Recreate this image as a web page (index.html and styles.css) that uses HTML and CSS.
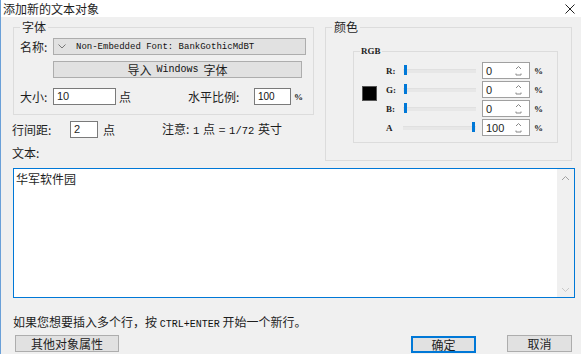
FILE: index.html
```html
<!DOCTYPE html>
<html lang="zh-CN">
<head>
<meta charset="utf-8">
<title>添加新的文本对象</title>
<link rel="stylesheet" href="styles.css">
</head>
<body>
<div class="window">
  <div class="titlebar">
    <span class="title">添加新的文本对象</span>
    <svg class="close" width="10" height="10" viewBox="0 0 10 10"><path d="M0.5 0.5L9.5 9.5M9.5 0.5L0.5 9.5" stroke="#222" stroke-width="1" fill="none"/></svg>
  </div>
  <div class="main">
    <div class="top">
      <div class="leftcol">
        <fieldset class="group font-group">
          <legend>字体</legend>
          <div class="row r1">
            <span class="lbl w33">名称:</span>
            <div class="combo"><svg class="chev" width="8" height="5" viewBox="0 0 8 5"><path d="M0.5 0.5L4 4L7.5 0.5" stroke="#777" fill="none"/></svg><span class="mono combo-text">Non-Embedded Font: BankGothicMdBT</span></div>
          </div>
          <div class="row r2">
            <div class="btn import"><span>导入</span><span class="mono win">Windows</span><span>字体</span></div>
          </div>
          <div class="row r3">
            <span class="lbl w33">大小:</span>
            <div class="input size">10</div>
            <span class="lbl pt">点</span>
            <span class="lbl w66">水平比例:</span>
            <div class="input scale mono">100</div>
            <span class="pct">%</span>
          </div>
        </fieldset>
        <div class="row spacing">
          <span class="lbl w58">行间距:</span>
          <div class="input line">2</div>
          <span class="lbl pt2">点</span>
          <span class="lbl note">注意: <span class="mono n">1</span> 点 = <span class="mono n">1/72</span> 英寸</span>
        </div>
        <div class="textlbl">文本:</div>
      </div>
      <fieldset class="group color-group">
        <legend>颜色</legend>
        <fieldset class="group rgb">
          <legend class="serif">RGB</legend>
          <div class="rgbbody">
            <div class="swatch"></div>
            <div class="sliders">
              <div class="srow">
                <span class="ch serif">R:</span>
                <div class="track"><div class="thumb" style="left:1px"></div></div>
                <div class="spin"><span>0</span><svg width="7" height="11" viewBox="0 0 7 11"><path d="M1 4L3.5 1.5L6 4" stroke="#888" fill="none"/><path d="M1 8.5V10H6V8.5" stroke="#888" fill="none"/></svg></div>
                <span class="pct serif">%</span>
              </div>
              <div class="srow">
                <span class="ch serif">G:</span>
                <div class="track"><div class="thumb" style="left:1px"></div></div>
                <div class="spin"><span>0</span><svg width="7" height="11" viewBox="0 0 7 11"><path d="M1 4L3.5 1.5L6 4" stroke="#888" fill="none"/><path d="M1 8.5V10H6V8.5" stroke="#888" fill="none"/></svg></div>
                <span class="pct serif">%</span>
              </div>
              <div class="srow">
                <span class="ch serif">B:</span>
                <div class="track"><div class="thumb" style="left:1px"></div></div>
                <div class="spin"><span>0</span><svg width="7" height="11" viewBox="0 0 7 11"><path d="M1 4L3.5 1.5L6 4" stroke="#888" fill="none"/><path d="M1 8.5V10H6V8.5" stroke="#888" fill="none"/></svg></div>
                <span class="pct serif">%</span>
              </div>
              <div class="srow">
                <span class="ch serif">A</span>
                <div class="track"><div class="thumb" style="left:69px"></div></div>
                <div class="spin"><span>100</span><svg width="7" height="11" viewBox="0 0 7 11"><path d="M1 4L3.5 1.5L6 4" stroke="#888" fill="none"/><path d="M1 8.5V10H6V8.5" stroke="#888" fill="none"/></svg></div>
                <span class="pct serif">%</span>
              </div>
            </div>
          </div>
        </fieldset>
      </fieldset>
    </div>
    <div class="textarea">
      <div class="text">华军软件园</div>
      <div class="scrollbar">
        <svg width="9" height="6" viewBox="0 0 9 6"><path d="M1 5L4.5 1.5L8 5" stroke="#a0a0a0" fill="none"/></svg>
        <svg width="9" height="6" viewBox="0 0 9 6"><path d="M1 1L4.5 4.5L8 1" stroke="#c8c8c8" fill="none"/></svg>
      </div>
    </div>
    <div class="hint">如果您想要插入多个行，按 <span class="mono hk">CTRL+ENTER</span> 开始一个新行。</div>
    <div class="buttons">
      <div class="btn other">其他对象属性</div>
      <div class="btn ok">确定</div>
      <div class="btn cancel">取消</div>
    </div>
  </div>
</div>
</body>
</html>
```
FILE: styles.css
```css
* { box-sizing: border-box; }
html, body { margin: 0; padding: 0; }
body {
  width: 581px;
  height: 354px;
  overflow: hidden;
  font-family: "Noto Sans CJK SC", "Noto Sans", sans-serif;
  font-size: 12px;
  color: #1e1e1e;
  background: #f0f0f0;
}
.window {
  width: 581px;
  height: 354px;
  border-left: 1px solid #6aa0d8;
  background: #f0f0f0;
}
.titlebar {
  height: 17px;
  background: #fff;
  display: flex;
  align-items: center;
  justify-content: space-between;
  padding: 0 6px 0 2px;
}
.title { line-height: 14px; }
.close { margin-top: 1px; }
.main { padding-top: 4px; }
.mono { font-family: "Liberation Mono", "DejaVu Sans Mono", monospace; font-size: 9.5px; color: #111; }
.serif { font-family: "Liberation Serif", serif; font-weight: bold; font-size: 10px; }

.top { display: flex; align-items: flex-start; padding-left: 11px; }
.leftcol { width: 303px; }

.group {
  margin: 0;
  border: 1px solid #dcdcdc;
  min-width: 0;
}
.group > legend {
  padding: 0 2px;
  line-height: 12px;
  height: 12px;
}
.font-group { margin-left: 1px; width: 301px; padding: 0 6px 9px 6px; }

.row { display: flex; align-items: center; height: 17px; }
.lbl { line-height: 17px; white-space: nowrap; }
.w33 { width: 33px; }
.w58 { width: 58px; }
.w66 { width: 66px; }
.r1 { margin-top: 5px; }
.r2 { margin-top: 6px; }
.r3 { margin-top: 10px; }

.combo {
  width: 253px;
  height: 17px;
  border: 1px solid #adadad;
  background: #e1e1e1;
  display: flex;
  align-items: center;
  padding-left: 4px;
}
.chev { margin-right: 10px; }
.combo-text { font-size: 9px; }

.btn {
  height: 17px;
  border: 1px solid #adadad;
  background: #e1e1e1;
  display: flex;
  align-items: center;
  justify-content: center;
  line-height: 15px;
}
.import { margin-left: 33px; width: 249px; gap: 5px; }
.import .win { font-size: 10px; }

.input {
  height: 17px;
  border: 1px solid #7a7a7a;
  background: #fff;
  padding-left: 3px;
  line-height: 15px;
  font-family: "Liberation Sans", sans-serif;
  font-size: 11px;
}
.size { width: 63px; }
.pt { width: 72px; padding-left: 3px; }
.scale { width: 37px; font-size: 10px; }
.pct { padding-left: 3px; font-family: "Liberation Serif", serif; font-weight: bold; font-size: 9px; }

.spacing { margin-top: 6px; }
.line { width: 28px; }
.pt2 { width: 64px; padding-left: 5px; }
.note { word-spacing: 1px; }
.note .n { font-size: 10.5px; }

.textlbl { margin-top: 8px; line-height: 13px; }

.color-group { margin-left: 10px; width: 247px; padding: 0 6px 17px 6px; }
.rgb { margin: 13px 0 0 21px; width: 205px; padding: 0 6px 6px 6px; }
.rgb > legend { padding: 0 1px; line-height: 10px; height: 10px; font-size: 9px; }
.rgbbody { display: flex; margin-top: 6px; }
.swatch {
  width: 15px; height: 15px;
  margin: 24px 0 0 2px;
  background: #000;
  border: 1px solid #555;
}
.sliders { margin-left: 9px; display: flex; flex-direction: column; gap: 2px; }
.srow { display: flex; align-items: center; height: 17px; }
.ch { width: 17px; font-size: 9px; }
.track {
  position: relative;
  width: 73px;
  height: 17px;
}
.track::before {
  content: "";
  position: absolute;
  left: 0; right: 0; top: 7px;
  height: 3px;
  background: #e7e7e7;
  border-top: 1px solid #e0e0e0;
}
.thumb {
  position: absolute;
  top: 3px;
  width: 3px;
  height: 10px;
  background: #0078d7;
}
.spin {
  margin-left: 6px;
  width: 48px;
  height: 17px;
  border: 1px solid #a0a0a0;
  background: #fff;
  display: flex;
  align-items: center;
  justify-content: space-between;
  padding: 0 7px 0 3px;
  font-family: "Liberation Sans", sans-serif;
  font-size: 11px;
}
.srow .pct { padding-left: 4px; }

.textarea {
  margin: 7px 6px 0 12px;
  height: 130px;
  border: 1px solid #0078d7;
  background: #fff;
  display: flex;
}
.text { flex: 1; padding: 3px 2px; line-height: 14px; }
.scrollbar {
  width: 17px;
  background: #f0f0f0;
  display: flex;
  flex-direction: column;
  justify-content: space-between;
  align-items: center;
  padding: 6px 0 4px;
}

.hint { margin: 17px 0 0 12px; line-height: 13px; }
.hint .hk { font-size: 10px; }
.buttons { display: flex; margin-top: 4px; padding: 0 9px 0 14px; }
.other { width: 104px; }
.ok { margin-left: auto; width: 65px; border: 1px solid #0078d7; box-shadow: inset 0 0 0 1px #0078d7; margin-top: 1px; }
.cancel { margin-left: 31px; width: 65px; }
```
